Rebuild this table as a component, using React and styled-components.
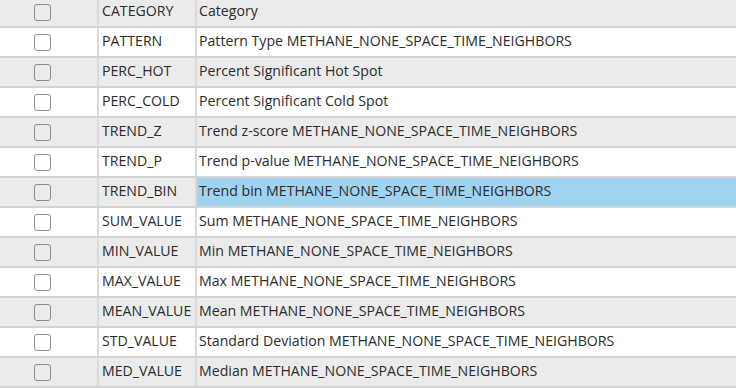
import React from 'react';
import styled, { createGlobalStyle } from 'styled-components';

const GlobalStyle = createGlobalStyle`
    html, body {
        margin: 0;
        padding: 0;
        background: #ffffff;
    }
`

const Table = styled.div`
    margin-top: -2px;
    width: 736px;
    font-family: "Open Sans", "Noto Sans", sans-serif;
    font-size: 14.15px;
    color: #2c2c2c;
`

const Row = styled.div`
    display: grid;
    grid-template-columns: 99px 98px 1fr;
    height: 28px;
    border-bottom: 2px solid #d3d3d3;
    background: ${p => (p.$alt ? '#ebebeb' : '#ffffff')};
`

const Cell = styled.div`
    display: flex;
    align-items: center;
    padding-left: ${p => p.$pad || 3}px;
    padding-bottom: 3px;
    border-right: 2px solid #dadada;
    white-space: nowrap;
    overflow: hidden;
    background: ${p => (p.$selected ? '#9fd3f1' : 'transparent')};
    &:last-child {
        border-right: none;
    }
`

const CheckCell = styled(Cell)`
    justify-content: flex-start;
    padding-left: 34px;
    padding-bottom: 0;
`

const Checkbox = styled.span`
    box-sizing: border-box;
    width: 17px;
    height: 17px;
    border: 1px solid #8e8e8e;
    border-radius: 3px;
    background: transparent;
`

const rows = [
    ['CATEGORY', 'Category'],
    ['PATTERN', 'Pattern Type METHANE_NONE_SPACE_TIME_NEIGHBORS'],
    ['PERC_HOT', 'Percent Significant Hot Spot'],
    ['PERC_COLD', 'Percent Significant Cold Spot'],
    ['TREND_Z', 'Trend z-score METHANE_NONE_SPACE_TIME_NEIGHBORS'],
    ['TREND_P', 'Trend p-value METHANE_NONE_SPACE_TIME_NEIGHBORS'],
    ['TREND_BIN', 'Trend bin METHANE_NONE_SPACE_TIME_NEIGHBORS'],
    ['SUM_VALUE', 'Sum METHANE_NONE_SPACE_TIME_NEIGHBORS'],
    ['MIN_VALUE', 'Min METHANE_NONE_SPACE_TIME_NEIGHBORS'],
    ['MAX_VALUE', 'Max METHANE_NONE_SPACE_TIME_NEIGHBORS'],
    ['MEAN_VALUE', 'Mean METHANE_NONE_SPACE_TIME_NEIGHBORS'],
    ['STD_VALUE', 'Standard Deviation METHANE_NONE_SPACE_TIME_NEIGHBORS'],
    ['MED_VALUE', 'Median METHANE_NONE_SPACE_TIME_NEIGHBORS'],
]

function App() {
    return (
        <>
            <GlobalStyle />
            <Table>
                {rows.map(([name, alias], i) => (
                    <Row key={name} $alt={i % 2 === 0}>
                        <CheckCell>
                            <Checkbox />
                        </CheckCell>
                        <Cell $pad={3}>{name}</Cell>
                        <Cell $pad={2} $selected={name === 'TREND_BIN'}>{alias}</Cell>
                    </Row>
                ))}
            </Table>
        </>
    )
}

export default App;
